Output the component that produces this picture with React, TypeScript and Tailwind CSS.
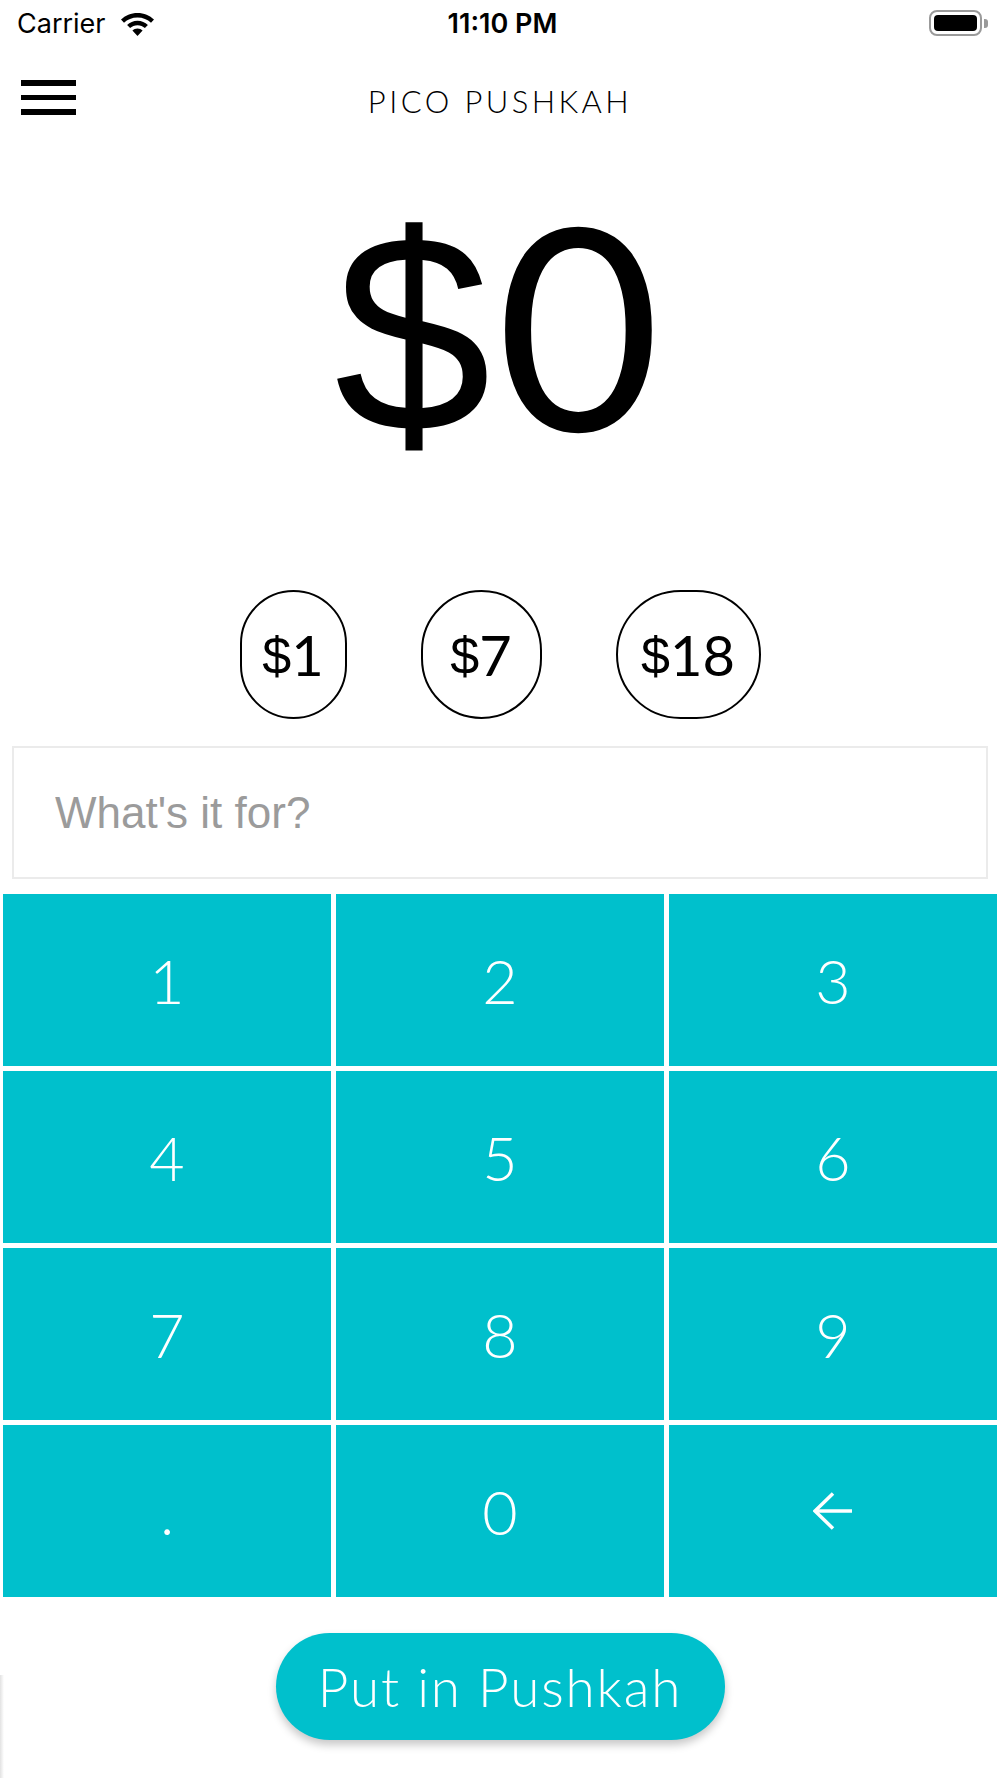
import { useState } from 'react';

const keys = ['1', '2', '3', '4', '5', '6', '7', '8', '9', '.', '0', 'back'];
const presets = [
  { value: '1', width: 'w-[107px]' },
  { value: '7', width: 'w-[121px]' },
  { value: '18', width: 'w-[145px]' },
];

function WifiIcon() {
  return (
    <svg width="35" height="25" viewBox="0 0 35 25" fill="black">
      <path d="M17.5 2C11 2 5.2 4.5 1 8.6l3 3.1C7.4 8.4 12.2 6.4 17.5 6.4s10.1 2 13.5 5.3l3-3.1C29.8 4.5 24 2 17.5 2z" />
      <path d="M17.5 9.8c-4.1 0-7.7 1.6-10.4 4.2l3 3.1c1.9-1.8 4.5-2.9 7.4-2.9s5.5 1.1 7.4 2.9l3-3.1c-2.7-2.6-6.3-4.2-10.4-4.2z" />
      <path d="M17.5 17.6c-2 0-3.8.8-5.1 2l5.1 5.3 5.1-5.3c-1.3-1.2-3.1-2-5.1-2z" />
    </svg>
  );
}

function BatteryIcon() {
  return (
    <div className="flex items-center">
      <div className="flex h-[26px] w-[53px] items-center rounded-[8px] border-2 border-[#9a9a9a] p-[3px]">
        <div className="h-full w-full rounded-[4px] bg-black" />
      </div>
      <div className="ml-[2px] h-[9px] w-[4px] rounded-r-[3px] bg-[#9a9a9a]" />
    </div>
  );
}

function BackArrow() {
  return (
    <svg width="40" height="38" viewBox="0 0 40 38" fill="none" stroke="white" strokeWidth="3.5">
      <path d="M39 19H2" />
      <path d="M20 1.5L2 19l18 17.5" />
    </svg>
  );
}

// Lato's dollar sign is slanted; the design has a straight bar through it
function Dollar() {
  return <span className="font-['Liberation_Sans',sans-serif]">$</span>;
}

export default function App() {
  const [amount, setAmount] = useState('0');
  const [note, setNote] = useState('');

  const press = (k: string) => {
    if (k === 'back') {
      setAmount((a) => (a.length > 1 ? a.slice(0, -1) : '0'));
    } else {
      setAmount((a) => (a === '0' && k !== '.' ? k : a + k));
    }
  };

  return (
    <div className="relative h-[1778px] w-[1000px] overflow-hidden bg-white font-['Lato',sans-serif] text-black">
      {/* status bar */}
      <div className="flex h-[46px] items-center justify-between pl-[17px] pr-[12px] font-['Inter',sans-serif]">
        <div className="flex w-[200px] items-center gap-[14px]">
          <span className="text-[27px] leading-none">Carrier</span>
          <WifiIcon />
        </div>
        <span className="text-[27px] font-semibold leading-none">11:10 PM</span>
        <div className="flex w-[200px] justify-end">
          <BatteryIcon />
        </div>
      </div>

      {/* nav */}
      <div className="relative flex h-[110px] items-center justify-center">
        <button className="absolute left-[21px] top-[34px] flex w-[55px] flex-col gap-[9px]">
          <span className="h-[5.5px] w-full bg-black" />
          <span className="h-[5.5px] w-full bg-black" />
          <span className="h-[5.5px] w-full bg-black" />
        </button>
        <h1 className="text-[31px] font-light leading-none tracking-[0.11em]">PICO PUSHKAH</h1>
      </div>

      {/* amount */}
      <div className="flex h-[343px] items-center justify-center">
        <span className="text-[282px] leading-none tracking-[0.02em]">
          <Dollar />
          {amount}
        </span>
      </div>

      {/* presets */}
      <div className="mt-[91px] flex justify-center gap-[74px]">
        {presets.map((p) => (
          <button
            key={p.value}
            onClick={() => setAmount(p.value)}
            className={`${p.width} flex h-[129px] items-center justify-center rounded-full border-2 border-black text-[56px] leading-none`}
          >
            <span className="text-[52px] font-light">
              <Dollar />
            </span>
            {p.value}
          </button>
        ))}
      </div>

      {/* note */}
      <div className="mx-[12px] mt-[27px] flex h-[133px] items-center border-2 border-[#ebebeb] pl-[41px]">
        <input
          value={note}
          onChange={(e) => setNote(e.target.value)}
          placeholder="What's it for?"
          className="w-full bg-transparent font-['Liberation_Sans',sans-serif] text-[44px] outline-none placeholder:text-[#9b9b9b]"
        />
      </div>

      {/* keypad */}
      <div className="mt-[15px] grid grid-cols-3 gap-[5px] px-[3px]">
        {keys.map((k) => (
          <button
            key={k}
            onClick={() => press(k)}
            className="flex h-[172px] items-center justify-center bg-[#00c0cc] text-[61px] font-light leading-none text-white"
          >
            {k === 'back' ? <BackArrow /> : k}
          </button>
        ))}
      </div>

      {/* submit */}
      <div className="mt-[36px] flex justify-center">
        <button className="flex h-[107px] w-[449px] items-center justify-center rounded-full bg-[#00c0cc] text-[53px] font-light tracking-[0.035em] text-white shadow-[0_5px_8px_rgba(0,0,0,0.22)]">
          Put in Pushkah
        </button>
      </div>

      {/* drawer edge */}
      <div className="absolute bottom-0 left-0 h-[103px] w-[4px] bg-gradient-to-r from-[#e2e2e2] to-transparent" />
    </div>
  );
}
